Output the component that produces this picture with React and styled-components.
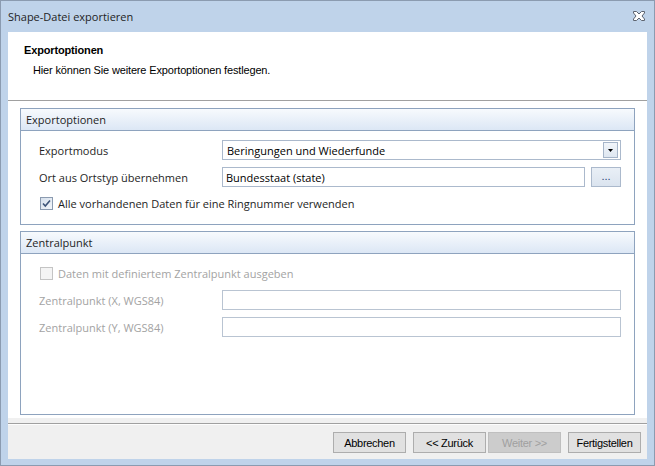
import React from 'react';
import styled, { createGlobalStyle } from 'styled-components';

const GlobalStyle = createGlobalStyle`
  html, body { margin: 0; padding: 0; background: #fff; }
  body { font-family: "Open Sans", "Noto Sans", sans-serif; }
`;

const UI_FONT = '"Open Sans", "Noto Sans", sans-serif';
const CLASSIC_FONT = '"Liberation Sans", Arial, sans-serif';

const Window = styled.div`
  width: 655px;
  height: 466px;
  box-sizing: border-box;
  border: 1px solid #8b9bb0;
  background: #bfd3ea;
  display: flex;
  flex-direction: column;
`;

const TitleBar = styled.div`
  height: 30px;
  flex: none;
  display: flex;
  align-items: center;
  justify-content: space-between;
  padding: 0 9px 1px 7px;
  font-family: ${UI_FONT};
  font-size: 11px;
  color: #1e1e1e;
`;

const Client = styled.div`
  flex: 1;
  margin: 0 7px 7px 7px;
  display: flex;
  flex-direction: column;
  background: #fff;
`;

const Header = styled.div`
  height: 69px;
  flex: none;
  border-bottom: 1px solid #a0a0a0;
  padding: 11px 0 0 16px;
  box-sizing: border-box;
  font-family: ${CLASSIC_FONT};
  font-size: 11px;
  letter-spacing: -0.15px;
  color: #000;
`;

const HeaderTitle = styled.div`
  font-weight: bold;
  line-height: 14px;
`;

const HeaderText = styled.div`
  margin: 6px 0 0 9px;
  line-height: 14px;
`;

const Content = styled.div`
  flex: 1;
  padding: 7px 12px 3px 12px;
  display: flex;
  flex-direction: column;
  gap: 6px;
`;

const Group = styled.div`
  border: 1px solid #8ea3be;
  height: ${p => p.$h}px;
  box-sizing: border-box;
  display: flex;
  flex-direction: column;
`;

const GroupHeader = styled.div`
  height: 21px;
  flex: none;
  border-bottom: 1px solid #8ea3be;
  background: linear-gradient(#f7fafd, #dce7f5);
  padding-left: 5px;
  display: flex;
  align-items: center;
  font-family: ${UI_FONT};
  font-size: 11px;
  color: #1e1e1e;
`;

const GroupBody = styled.div`
  padding: ${p => p.$top}px 13px 0 18px;
  display: flex;
  flex-direction: column;
`;

const Row = styled.div`
  display: flex;
  align-items: center;
  height: 20px;
  margin-bottom: 7px;
`;

const Label = styled.div`
  width: 183px;
  flex: none;
  font-family: ${UI_FONT};
  font-size: 11px;
  color: ${p => (p.$disabled ? '#a3a3a3' : '#1e1e1e')};
`;

const Field = styled.div`
  flex: 1;
  height: 20px;
  box-sizing: border-box;
  border: 1px solid ${p => (p.$disabled ? '#b9c4d2' : '#abb9cc')};
  background: #fff;
  display: flex;
  align-items: center;
  padding-left: ${p => p.$pad || 4}px;
  font-family: ${UI_FONT};
  font-size: 11px;
  color: #000;
`;

const Combo = styled(Field)`
  padding-right: 2px;
  justify-content: space-between;
`;

const DropButton = styled.div`
  width: 15px;
  height: 16px;
  box-sizing: border-box;
  border: 1px solid #a6b5c9;
  background: linear-gradient(#f1f5fa, #dfe7f1);
  display: flex;
  align-items: center;
  justify-content: center;
`;

const EllipsisButton = styled.div`
  width: 30px;
  height: 20px;
  margin-left: 6px;
  flex: none;
  box-sizing: border-box;
  border: 1px solid #abb9cc;
  background: linear-gradient(#e9eff6, #dbe4ef);
  display: flex;
  align-items: center;
  justify-content: center;
  padding-bottom: 2px;
  font-family: ${CLASSIC_FONT};
  font-size: 11px;
  color: #1f3f73;
`;

const CheckRow = styled.label`
  display: flex;
  align-items: center;
  gap: 5px;
  height: 13px;
  margin: ${p => p.$m};
  padding-left: 1px;
  font-family: ${UI_FONT};
  font-size: 11px;
  color: ${p => (p.$disabled ? '#a3a3a3' : '#1e1e1e')};
`;

const Box = styled.span`
  width: 13px;
  height: 13px;
  flex: none;
  box-sizing: border-box;
  border: 1px solid ${p => (p.$disabled ? '#c4c4c4' : '#8b9bb0')};
  background: ${p => (p.$disabled ? '#f4f4f4' : 'linear-gradient(135deg, #d6e0ec, #f3f6fa)')};
  display: flex;
  align-items: center;
  justify-content: center;
`;

const Footer = styled.div`
  height: 41px;
  flex: none;
  background: #f0f0f0;
  padding-top: 5px;
  box-sizing: border-box;
`;

const ButtonBar = styled.div`
  border-top: 1px solid #a0a0a0;
  box-shadow: inset 0 1px 0 #fdfdfd;
  display: flex;
  justify-content: flex-end;
  padding: 8px 6px 0 0;
  gap: 7px;
`;

const NavPair = styled.div`
  display: flex;
  gap: 2px;
`;

const Button = styled.div`
  width: 73px;
  height: 21px;
  box-sizing: border-box;
  border: 1px solid ${p => (p.$disabled ? '#bfbfbf' : '#adadad')};
  background: ${p => (p.$disabled ? '#cccccc' : '#e1e1e1')};
  display: flex;
  align-items: center;
  justify-content: center;
  font-family: ${CLASSIC_FONT};
  font-size: 11px;
  letter-spacing: -0.3px;
  color: ${p => (p.$disabled ? '#a0a0a0' : '#000')};
`;

const CloseIcon = () => (
  <svg width="12" height="10" viewBox="0 0 12 10">
    <path
      d="M0.5 0.5h3l2.5 2.5 2.5-2.5h3v1.5l-2.5 3 2.5 3v1.5h-3l-2.5-2.5-2.5 2.5h-3v-1.5l2.5-3-2.5-3z"
      fill="#fff"
      stroke="#5d6470"
      strokeWidth="1"
      strokeLinejoin="miter"
    />
  </svg>
);

const Check = () => (
  <svg width="9" height="9" viewBox="0 0 9 9">
    <path d="M1 4.5l2.3 2.5L8 1.5" fill="none" stroke="#3d5478" strokeWidth="1.6" />
  </svg>
);

export default function App() {
  return (
    <>
      <GlobalStyle />
      <Window>
        <TitleBar>
          <span>Shape-Datei exportieren</span>
          <CloseIcon />
        </TitleBar>
        <Client>
          <Header>
            <HeaderTitle>Exportoptionen</HeaderTitle>
            <HeaderText>Hier können Sie weitere Exportoptionen festlegen.</HeaderText>
          </Header>
          <Content>
            <Group $h={117}>
              <GroupHeader>Exportoptionen</GroupHeader>
              <GroupBody $top={9}>
                <Row>
                  <Label>Exportmodus</Label>
                  <Combo>
                    <span>Beringungen und Wiederfunde</span>
                    <DropButton>
                      <svg width="5" height="3" viewBox="0 0 5 3">
                        <path d="M0 0h5L2.5 3z" fill="#000" />
                      </svg>
                    </DropButton>
                  </Combo>
                </Row>
                <Row>
                  <Label>Ort aus Ortstyp übernehmen</Label>
                  <Field $pad={3}>Bundesstaat (state)</Field>
                  <EllipsisButton>...</EllipsisButton>
                </Row>
                <CheckRow $m="3px 0 0 0">
                  <Box>
                    <Check />
                  </Box>
                  Alle vorhandenen Daten für eine Ringnummer verwenden
                </CheckRow>
              </GroupBody>
            </Group>
            <Group $h={184}>
              <GroupHeader>Zentralpunkt</GroupHeader>
              <GroupBody $top={13}>
                <CheckRow $disabled $m="0 0 10px 0">
                  <Box $disabled />
                  Daten mit definiertem Zentralpunkt ausgeben
                </CheckRow>
                <Row>
                  <Label $disabled>Zentralpunkt (X, WGS84)</Label>
                  <Field $disabled />
                </Row>
                <Row>
                  <Label $disabled>Zentralpunkt (Y, WGS84)</Label>
                  <Field $disabled />
                </Row>
              </GroupBody>
            </Group>
          </Content>
          <Footer>
            <ButtonBar>
              <Button>Abbrechen</Button>
              <NavPair>
                <Button>&lt;&lt; Zurück</Button>
                <Button $disabled>Weiter &gt;&gt;</Button>
              </NavPair>
              <Button>Fertigstellen</Button>
            </ButtonBar>
          </Footer>
        </Client>
      </Window>
    </>
  );
}
